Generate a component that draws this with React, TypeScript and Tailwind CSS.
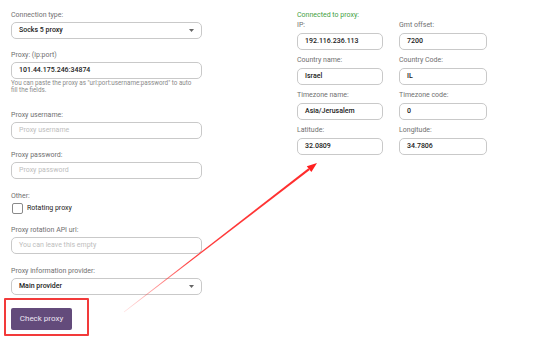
import React from "react";

const font = { fontFamily: "Roboto, 'Liberation Sans', sans-serif" };

function Label({ children, className = "" }: { children: React.ReactNode; className?: string }) {
  return <div className={`text-[7px] leading-[10px] text-[#707070] ${className}`}>{children}</div>;
}

function Input({ value, placeholder, className = "" }: { value?: string; placeholder?: string; className?: string }) {
  return (
    <div
      className={`h-[17px] rounded-[5px] border border-[#c9c9c9] bg-white px-[7px] flex items-center text-[7px] ${
        value ? "text-[#222] font-medium" : "text-[#bdbdbd]"
      } ${className}`}
    >
      {value ?? placeholder}
    </div>
  );
}

function Select({ value }: { value: string }) {
  return (
    <div className="h-[17px] rounded-[5px] border border-[#c9c9c9] bg-white pl-[7px] pr-[7px] flex items-center justify-between text-[7px] text-[#222] font-medium">
      <span>{value}</span>
      <svg width="5" height="3" viewBox="0 0 5 3">
        <path d="M0 0 L5 0 L2.5 3 Z" fill="#666" />
      </svg>
    </div>
  );
}

function InfoField({ label, value }: { label: string; value: string }) {
  return (
    <div className="mb-[5.5px]">
      <Label className="mb-[2.5px]">{label}</Label>
      <Input value={value} />
    </div>
  );
}

export default function App() {
  return (
    <div className="relative w-[554px] h-[350px] bg-white overflow-hidden" style={font}>
      <div className="flex pt-[10px] pl-[11px]">
        {/* Left column */}
        <div className="w-[191px] flex flex-col">
          <Label className="mb-[2px]">Connection type:</Label>
          <Select value="Socks 5 proxy" />

          <Label className="mt-[11px] mb-[2px]">Proxy: (ip:port)</Label>
          <Input value="101.44.175.246:34874" />
          <div className="text-[6.3px] leading-[7.5px] text-[#8a8a8a] mt-[0.5px]">
            You can paste the proxy as "url:port:username:password" to auto
            <br />
            fill the fields.
          </div>

          <Label className="mt-[15px] mb-[2px]">Proxy username:</Label>
          <Input placeholder="Proxy username" />

          <Label className="mt-[11px] mb-[2px]">Proxy password:</Label>
          <Input placeholder="Proxy password" />

          <Label className="mt-[12px] mb-[2px]">Other:</Label>
          <div className="flex items-center h-[12px]">
            <div className="w-[11px] h-[11px] ml-[1px] rounded-[2px] border border-[#8a8a8a] bg-white" />
            <span className="ml-[4px] text-[7px] text-[#222]">Rotating proxy</span>
          </div>

          <Label className="mt-[10px] mb-[2px]">Proxy rotation API url:</Label>
          <Input placeholder="You can leave this empty" />

          <Label className="mt-[12px] mb-[2px]">Proxy information provider:</Label>
          <Select value="Main provider" />

          <div className="mt-[3px] -ml-[7px] w-[85px] h-[38px] border-2 border-[#f23a3a] rounded-[1px] pl-[5px] pt-[8px]">
            <button className="w-[61px] h-[22px] rounded-[2px] bg-[#634b7b] text-[#ece4f2] text-[8px] flex items-center justify-center">
              Check proxy
            </button>
          </div>
        </div>

        {/* Right column */}
        <div className="ml-[95px] w-[190px]">
          <div className="text-[7px] leading-[10px] text-[#3f9f3f]">Connected to proxy:</div>
          <div className="grid grid-cols-[86px_88px] gap-x-[16px]">
            <InfoField label="IP:" value="192.116.236.113" />
            <InfoField label="Gmt offset:" value="7200" />
            <InfoField label="Country name:" value="Israel" />
            <InfoField label="Country Code:" value="IL" />
            <InfoField label="Timezone name:" value="Asia/Jerusalem" />
            <InfoField label="Timezone code:" value="0" />
            <InfoField label="Latitude:" value="32.0809" />
            <InfoField label="Longitude:" value="34.7806" />
          </div>
        </div>
      </div>

      {/* Annotation arrow */}
      <svg className="absolute left-0 top-0 pointer-events-none" width="554" height="350" viewBox="0 0 554 350">
        <defs>
          <linearGradient id="arrowGrad" x1="124" y1="312" x2="317" y2="163" gradientUnits="userSpaceOnUse">
            <stop offset="0" stopColor="#ff2a2a" stopOpacity="0.15" />
            <stop offset="0.35" stopColor="#ff2a2a" stopOpacity="0.9" />
            <stop offset="1" stopColor="#ff2a2a" stopOpacity="1" />
          </linearGradient>
        </defs>
        <polygon
          points="124.18,312.24 123.82,311.76 308.41,168.24 309.75,169.98"
          fill="url(#arrowGrad)"
        />
        <polygon points="317,163 311.4,172.1 306.8,166.2" fill="#ff2020" />
      </svg>
    </div>
  );
}
